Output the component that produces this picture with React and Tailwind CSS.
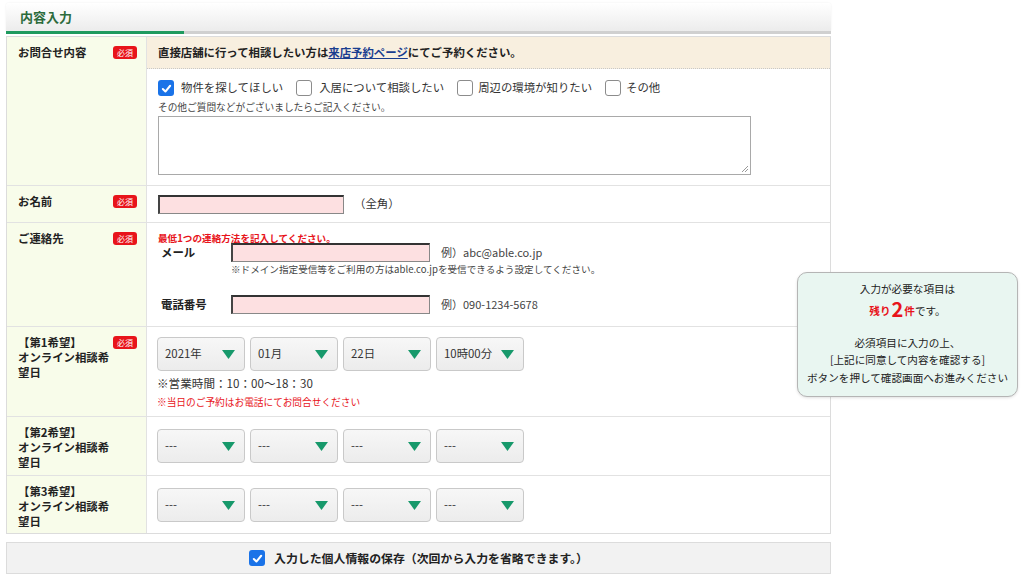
import React from "react";

function Badge() {
  return (
    <span className="flex items-center justify-center w-[24px] h-[13px] rounded-[3px] bg-[#e8141b] text-white text-[8px] leading-none">
      必須
    </span>
  );
}

function Check({ checked }) {
  if (checked) {
    return (
      <span className="inline-flex shrink-0 items-center justify-center w-[16px] h-[16px] rounded-[3px] bg-[#1a73e8]">
        <svg width="11" height="11" viewBox="0 0 12 12">
          <path d="M2 6.5l2.8 2.8L10 3" fill="none" stroke="white" strokeWidth="2.2" strokeLinecap="round" strokeLinejoin="round" />
        </svg>
      </span>
    );
  }
  return <span className="inline-block shrink-0 w-[16px] h-[16px] rounded-[3px] border border-[#8c8c8c] bg-white" />;
}

function Sel({ v }) {
  return (
    <div className="w-[88px] h-[34px] rounded-[4px] border border-[#c9c9c9] bg-gradient-to-b from-[#f7f7f7] to-[#ececec] flex items-center justify-between pl-[7px] pr-[9px] text-[11.4px] text-[#333]">
      <span>{v}</span>
      <svg width="13" height="9" viewBox="0 0 13 9">
        <path d="M0 0h13L6.5 9z" fill="#17996b" />
      </svg>
    </div>
  );
}

function PinkInput({ w }) {
  return (
    <div
      className={`${w} h-[19px] bg-[#fde0e1] border-t-[2px] border-l-[2px] border-r border-b border-t-[#333] border-l-[#444] border-r-[#888] border-b-[#888]`}
    />
  );
}

function Label({ children, req }) {
  return (
    <div className="w-[140px] shrink-0 bg-[#f8fcea] border-r border-[#e2e2e2] pl-[11px] pr-[9px] pt-[8px] flex justify-between items-start">
      <div className="text-[11.4px] leading-[15px] font-bold text-[#222] w-[96px]">{children}</div>
      {req ? <div className="flex pt-[1px]"><Badge /></div> : null}
    </div>
  );
}

export default function App() {
  return (
    <div className="relative w-[1024px] h-[576px] bg-white font-['Noto_Sans_CJK_JP','Noto_Sans',sans-serif] text-[#333] overflow-hidden">
      <div className="ml-[6px] w-[825px] pt-[3px]">
        {/* header */}
        <div className="h-[28px] bg-gradient-to-b from-white to-[#ececec] rounded-t-[3px] shadow-[0_0_2px_rgba(0,0,0,0.08)] flex items-center pl-[14px]">
          <span className="text-[13px] font-bold text-[#2c6b3c]">内容入力</span>
        </div>
        <div className="flex h-[3px]">
          <div className="w-[178px] bg-[#1f9a5f]" />
          <div className="flex-1 bg-[#d0d0d0]" />
        </div>

        {/* table */}
        <div className="mt-[2px] border border-[#dcdcdc]">
          {/* row1 */}
          <div className="flex h-[149px] border-b border-[#e2e2e2]">
            <Label req>お問合せ内容</Label>
            <div className="flex-1 flex flex-col">
              <div className="h-[32px] bg-[#f8efdf] border-b border-dotted border-[#c8c8c8] flex items-center pl-[11px] text-[11.4px] font-bold text-[#222]">
                直接店舗に行って相談したい方は<span className="text-[#1a3d8f] underline">来店予約ページ</span>にてご予約ください。
              </div>
              <div className="pl-[11px] pt-[10px]">
                <div className="flex items-center text-[11.4px] text-[#333] h-[18px]">
                  <Check checked />
                  <span className="ml-[7px] mr-[13px]">物件を探してほしい</span>
                  <Check />
                  <span className="ml-[7px] mr-[13px]">入居について相談したい</span>
                  <Check />
                  <span className="ml-[5px] mr-[13px]">周辺の環境が知りたい</span>
                  <Check />
                  <span className="ml-[5px]">その他</span>
                </div>
                <div className="text-[9.7px] leading-[12px] mt-[4px] text-[#444]">その他ご質問などがございましたらご記入ください。</div>
                <div className="relative mt-[3px] w-[593px] h-[59px] border border-[#a9a9a9] bg-white">
                  <svg className="absolute right-[1px] bottom-[1px]" width="8" height="8" viewBox="0 0 8 8">
                    <path d="M7 1L1 7M7 4L4 7" stroke="#999" strokeWidth="1" />
                  </svg>
                </div>
              </div>
            </div>
          </div>

          {/* row2 */}
          <div className="flex h-[37px] border-b border-[#e2e2e2]">
            <Label req>お名前</Label>
            <div className="flex-1 flex items-center pl-[11px]">
              <PinkInput w="w-[186px]" />
              <span className="ml-[10px] text-[11.4px]">（全角）</span>
            </div>
          </div>

          {/* row3 */}
          <div className="flex h-[104px] border-b border-[#e2e2e2]">
            <Label req>ご連絡先</Label>
            <div className="flex-1 pl-[11px] pt-[9px]">
              <div className="text-[9.6px] leading-[12px] font-bold text-[#e8141b]">最低1つの連絡方法を記入してください。</div>
              <div className="flex items-center mt-[-1px]">
                <span className="w-[73px] pl-[3px] text-[11.4px] font-bold text-[#222] pt-[1px]">メール</span>
                <PinkInput w="w-[199px]" />
                <span className="ml-[11px] text-[11px] text-[#444]">例）abc@able.co.jp</span>
              </div>
              <div className="ml-[73px] mt-[1px] text-[9.6px] leading-[12px] text-[#444]">
                ※ドメイン指定受信等をご利用の方はable.co.jpを受信できるよう設定してください。
              </div>
              <div className="flex items-center mt-[20px]">
                <span className="w-[73px] pl-[3px] text-[11.4px] font-bold text-[#222]">電話番号</span>
                <PinkInput w="w-[199px]" />
                <span className="ml-[11px] text-[11px] text-[#444]">例）090-1234-5678</span>
              </div>
            </div>
          </div>

          {/* row4 */}
          <div className="flex h-[90px] border-b border-[#e2e2e2]">
            <Label req>【第1希望】<br />オンライン相談希望日</Label>
            <div className="flex-1 pl-[10px] pt-[10px]">
              <div className="flex gap-[5px]">
                <Sel v="2021年" />
                <Sel v="01月" />
                <Sel v="22日" />
                <Sel v="10時00分" />
              </div>
              <div className="text-[11.6px] leading-[14px] mt-[5px] text-[#333]">※営業時間：10：00〜18：30</div>
              <div className="text-[9.7px] leading-[12px] mt-[6px] text-[#e8141b]">※当日のご予約はお電話にてお問合せください</div>
            </div>
          </div>

          {/* row5 */}
          <div className="flex h-[59px] border-b border-[#e2e2e2]">
            <Label>【第2希望】<br />オンライン相談希望日</Label>
            <div className="flex-1 pl-[10px] pt-[12px]">
              <div className="flex gap-[5px]">
                <Sel v="---" />
                <Sel v="---" />
                <Sel v="---" />
                <Sel v="---" />
              </div>
            </div>
          </div>

          {/* row6 */}
          <div className="flex h-[57px]">
            <Label>【第3希望】<br />オンライン相談希望日</Label>
            <div className="flex-1 pl-[10px] pt-[12px]">
              <div className="flex gap-[5px]">
                <Sel v="---" />
                <Sel v="---" />
                <Sel v="---" />
                <Sel v="---" />
              </div>
            </div>
          </div>
        </div>

        {/* bottom bar */}
        <div className="mt-[8px] h-[32px] bg-[#f2f2f2] border border-[#dcdcdc] flex items-center justify-center">
          <Check checked />
          <span className="ml-[9px] text-[11.9px] font-bold text-[#222]">入力した個人情報の保存（次回から入力を省略できます。）</span>
        </div>
      </div>

      {/* floating box */}
      <div className="absolute left-[797px] top-[272px] w-[221px] h-[125px] rounded-[10px] border border-[#b5b5b5] bg-[#e9f6f1] shadow-[0_1px_3px_rgba(0,0,0,0.12)] flex flex-col items-center pt-[7px] text-[10.6px] leading-[17.5px] text-[#222]">
        <div>入力が必要な項目は</div>
        <div className="flex items-end h-[22px]">
          <span className="text-[#e8141b] font-bold">残り</span>
          <span className="text-[#e8141b] font-bold text-[20px] leading-[22px] mx-[1px]">2</span>
          <span className="text-[#e8141b] font-bold">件</span>
          <span>です。</span>
        </div>
        <div className="h-[14px]" />
        <div>必須項目に入力の上、</div>
        <div>[上記に同意して内容を確認する]</div>
        <div>ボタンを押して確認画面へお進みください</div>
      </div>
    </div>
  );
}
